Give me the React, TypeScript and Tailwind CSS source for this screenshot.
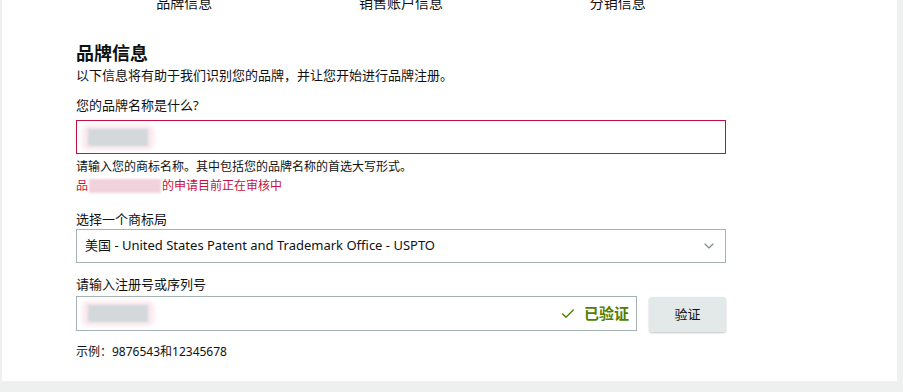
import { Check, ChevronDown } from 'lucide-react'

const font = { fontFamily: '"Noto Sans", "Noto Sans CJK SC", sans-serif' }

function Blur({ tint = 'gray' }: { tint?: 'gray' | 'pink' }) {
  const base = tint === 'pink' ? 'bg-[#f0c9d4]' : 'bg-[#d3d8da]'
  return (
    <span className="relative inline-block h-[17px] w-[60px]">
      <span className="absolute -inset-x-[6px] -inset-y-[4px] rounded-md bg-[#f9e9ee] blur-[2px]" />
      <span className={`absolute inset-y-0 left-0 right-0 ${base} blur-[1px]`} />
    </span>
  )
}

export default function App() {
  return (
    <div
      className="h-[392px] w-[903px] overflow-hidden bg-[#eef0f0] pl-[2px] pr-[6px] text-[#0f1111]"
      style={font}
    >
      <div className="h-[388px] bg-white">
        <div className="ml-[74px] w-[650px]">
          <div className="-mt-[7px] grid grid-cols-3 text-center text-[14px] leading-[20px]">
            <span>品牌信息</span>
            <span>销售账户信息</span>
            <span>分销信息</span>
          </div>

          <h2 className="mt-[28px] text-[18px] font-bold leading-[24px]">品牌信息</h2>
          <p className="mt-[1px] text-[13px] leading-[18px]">
            以下信息将有助于我们识别您的品牌，并让您开始进行品牌注册。
          </p>

          <label className="mt-[12px] block text-[13px] leading-[18px]">您的品牌名称是什么?</label>
          <div className="mt-[6px] flex h-[34px] items-center border border-[#c40f3e] pl-[11px]">
            <Blur />
          </div>
          <p className="mt-[5px] text-[12px] leading-[16px]">
            请输入您的商标名称。其中包括您的品牌名称的首选大写形式。
          </p>
          <p className="mt-[3px] flex items-center text-[12px] leading-[16px] text-[#c7123f]">
            品
            <span className="mx-[1px] inline-block h-[14px] w-[72px] bg-[#f0d2dc] blur-[1px]" />
            的申请目前正在审核中
          </p>

          <label className="mt-[16px] block text-[13px] leading-[18px]">选择一个商标局</label>
          <div className="mt-[1px] flex h-[34px] items-center justify-between border border-[#a6b3b4] pl-[8px] pr-[8px] text-[13px]">
            <span>美国 - United States Patent and Trademark Office - USPTO</span>
            <ChevronDown size={16} strokeWidth={1.75} className="text-[#7e8a8c]" />
          </div>

          <label className="mt-[12px] block text-[13px] leading-[18px]">请输入注册号或序列号</label>
          <div className="mt-[3px] flex items-start gap-[12px]">
            <div className="flex h-[35px] flex-1 items-center justify-between border border-[#a6b3b4] pl-[11px] pr-[7px]">
              <Blur />
              <span className="flex items-center gap-[8px] text-[15px] font-bold text-[#507f00]">
                <Check size={16} strokeWidth={2} />
                已验证
              </span>
            </div>
            <button className="mt-[1px] h-[35px] w-[77px] rounded-[3px] bg-[#e3e8e9] text-[13px] shadow-[0_1px_2px_rgba(15,17,17,0.25)]">
              验证
            </button>
          </div>
          <p className="mt-[12px] text-[12px] leading-[16px]">示例：9876543和12345678</p>
        </div>
      </div>
    </div>
  )
}
